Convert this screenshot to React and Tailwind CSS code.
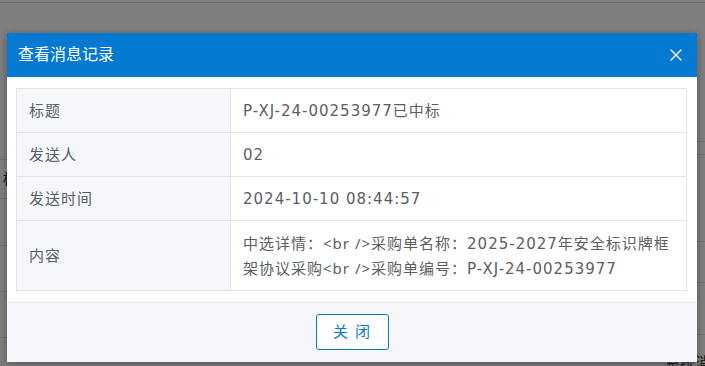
import React from 'react';

const rows = [
  { label: '标题', value: 'P-XJ-24-00253977已中标' },
  { label: '发送人', value: '02' },
  { label: '发送时间', value: '2024-10-10 08:44:57' },
  {
    label: '内容',
    value: '中选详情：<br />采购单名称：2025-2027年安全标识牌框架协议采购<br />采购单编号：P-XJ-24-00253977',
  },
];

// the raw "<br />" tags are shown as text; give them a narrower face
function Value({ text }) {
  const parts = text.split('<br />');
  return parts.map((p, i) => (
    <React.Fragment key={i}>
      {i > 0 && <span style={{ fontFamily: '"Noto Sans", sans-serif' }}>{'<br />'}</span>}
      {p}
    </React.Fragment>
  ));
}

function BackgroundPage() {
  return (
    <div className="h-[366px] w-full bg-white overflow-hidden text-[14px] text-[#333]">
      <div className="h-[3px] border-b border-[#d9d9d9]" />
      <div className="flex justify-between">
        <div className="w-[40px] flex flex-col">
          <div className="h-[157px] border-b border-[#e4e4e4]" />
          <div className="h-[39px] border-b border-[#e4e4e4] flex items-center pl-[3px]">标题</div>
          <div className="h-[47px] border-b border-[#e4e4e4]" />
          <div className="h-[46px] border-b border-[#e4e4e4]" />
          <div className="h-[46px] border-b border-[#e4e4e4]" />
        </div>
        <div className="w-[120px] flex flex-col items-end">
          <div className="w-full h-[139px] border-b border-[#e4e4e4]" />
          <div className="w-full h-[13px] border-b border-[#e4e4e4]" />
          <div className="w-full h-[87px] border-b border-[#e4e4e4]" />
          <div className="w-full h-[41px] border-b border-[#e4e4e4]" />
          <div className="w-full h-[52px] border-b border-[#e4e4e4]" />
          <div className="w-full pl-[80px] pt-[17px] whitespace-nowrap text-[15px]">系统消息</div>
        </div>
      </div>
    </div>
  );
}

export default function App() {
  return (
    <div
      className="relative w-[705px] h-[366px] overflow-hidden"
      style={{ fontFamily: '"DejaVu Sans", "Noto Sans CJK SC", sans-serif' }}
    >
      <BackgroundPage />
      <div className="absolute inset-0 bg-black/50" />

      <div className="absolute left-[7px] top-[33px] w-[690px] bg-white shadow-[0_2px_8px_rgba(0,0,0,0.35)]">
        <div className="h-[44px] bg-[#0479d1] flex items-center justify-between pl-[11px] pr-[14px]">
          <span className="text-white text-[16px]">查看消息记录</span>
          <svg width="12" height="12" viewBox="0 0 12 12" className="mr-[1px]">
            <path d="M1 1L11 11M11 1L1 11" stroke="white" strokeWidth="1.4" strokeLinecap="round" />
          </svg>
        </div>

        <div className="pt-[11px] pb-[11px] pl-[9px] pr-[10px]">
          <table className="w-full border-collapse text-[15px] leading-[24px] tracking-[1px] text-[#5a5e66]">
            <tbody>
              {rows.map((r) => (
                <tr key={r.label}>
                  <td className="w-[214px] bg-[#f5f7fa] border border-[#e2e4e8] py-[9.5px] pl-[12px] pr-[8px] align-middle">
                    {r.label}
                  </td>
                  <td className="border border-[#e2e4e8] py-[9.5px] pl-[12px] pr-[6px] align-middle">
                    <Value text={r.value} />
                  </td>
                </tr>
              ))}
            </tbody>
          </table>
        </div>

        <div className="h-[60px] bg-[#f5f7fa] border-t border-[#e4e6ea] flex justify-center pt-[11px]">
          <button className="w-[73px] h-[36px] border border-[#0479d1] rounded-[3px] bg-white text-[#0479d1] text-[15px] tracking-[1px]">
            关 闭
          </button>
        </div>
      </div>
    </div>
  );
}
